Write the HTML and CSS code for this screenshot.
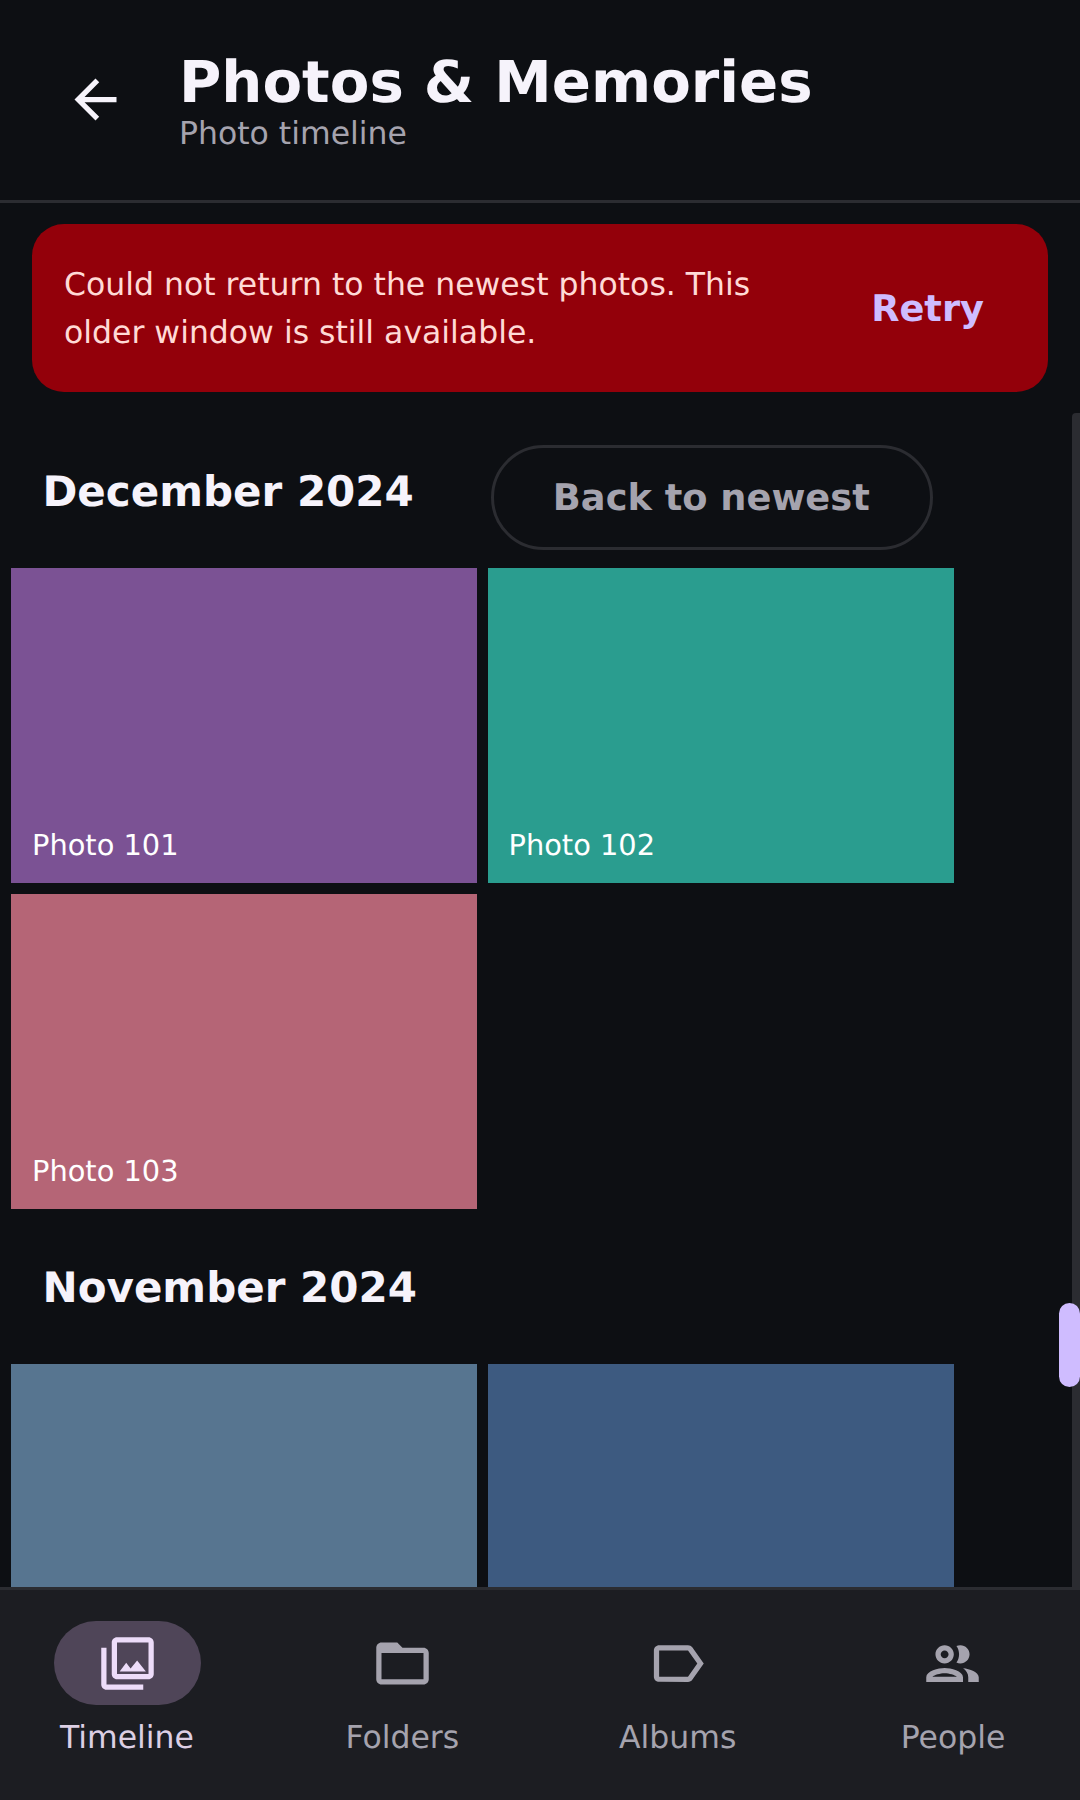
FILE: index.html
```html
<!DOCTYPE html>
<html lang="en">
<head>
<meta charset="utf-8">
<title>Photos &amp; Memories</title>
<link rel="stylesheet" href="styles.css">
</head>
<body>
<div class="app">
  <header class="topbar">
    <button class="icon-btn" aria-label="Back">
      <svg class="icon" viewBox="0 0 24 24"><path d="M20 11H7.83l5.59-5.59L12 4l-8 8 8 8 1.41-1.41L7.83 13H20v-2z"/></svg>
    </button>
    <div class="titles">
      <h1 class="title">Photos &amp; Memories</h1>
      <p class="subtitle">Photo timeline</p>
    </div>
  </header>
  <section class="banner">
    <p class="banner-text">Could not return to the newest photos. This older window is still available.</p>
    <button class="retry">Retry</button>
  </section>
  <main class="timeline">
    <div class="section-head">
      <h2 class="month">December 2024</h2>
      <button class="newest">Back to newest</button>
    </div>
    <div class="grid">
      <div class="tile purple"><span class="caption">Photo 101</span></div>
      <div class="tile teal"><span class="caption">Photo 102</span></div>
      <div class="tile rose"><span class="caption">Photo 103</span></div>
    </div>
    <div class="section-head">
      <h2 class="month">November 2024</h2>
    </div>
    <div class="grid">
      <div class="tile slate"></div>
      <div class="tile navy"></div>
    </div>
    <div class="rail"></div>
    <div class="thumb"></div>
  </main>
  <nav class="bottom-nav">
    <div class="nav-item active">
      <span class="pill"><svg class="icon" viewBox="0 0 24 24"><path d="M20 4v12H8V4h12m0-2H8c-1.1 0-2 .9-2 2v12c0 1.1.9 2 2 2h12c1.1 0 2-.9 2-2V4c0-1.1-.9-2-2-2zm-8.5 9.67l1.69 2.26 2.48-3.1L19 15H9zM2 6v14c0 1.1.9 2 2 2h14v-2H4V6H2z"/></svg></span>
      <span class="nav-label">Timeline</span>
    </div>
    <div class="nav-item">
      <span class="pill"><svg class="icon" viewBox="0 0 24 24"><path d="M20 6h-8l-2-2H4c-1.1 0-1.99.9-1.99 2L2 18c0 1.1.9 2 2 2h16c1.1 0 2-.9 2-2V8c0-1.1-.9-2-2-2zm0 12H4V8h16v10z"/></svg></span>
      <span class="nav-label">Folders</span>
    </div>
    <div class="nav-item">
      <span class="pill"><svg class="icon" viewBox="0 0 24 24"><path d="M17.63 5.84C17.27 5.33 16.67 5 16 5L5 5.01C3.9 5.01 3 5.9 3 7v10c0 1.1.9 1.99 2 1.99L16 19c.67 0 1.27-.33 1.63-.84L22 12l-4.37-6.16zM16 17H5V7h11l3.55 5L16 17z"/></svg></span>
      <span class="nav-label">Albums</span>
    </div>
    <div class="nav-item">
      <span class="pill"><svg class="icon" viewBox="0 0 24 24"><path d="M9 13.75c-2.34 0-7 1.17-7 3.5V19h14v-1.75c0-2.33-4.66-3.5-7-3.5zM4.34 17c.84-.58 2.87-1.25 4.66-1.25s3.82.67 4.66 1.25H4.34zM9 12c1.93 0 3.5-1.57 3.5-3.5S10.93 5 9 5 5.5 6.57 5.5 8.5 7.07 12 9 12zm0-5c.83 0 1.5.67 1.5 1.5S9.83 10 9 10s-1.5-.67-1.5-1.5S8.17 7 9 7zm7.04 6.81c1.16.84 1.96 1.96 1.96 3.44V19h4v-1.75c0-2.02-3.5-3.17-5.96-3.44zM15 12c1.93 0 3.5-1.57 3.5-3.5S16.93 5 15 5c-.54 0-1.04.13-1.5.35.63.89 1 1.98 1 3.15s-.37 2.26-1 3.15c.46.22.96.35 1.5.35z"/></svg></span>
      <span class="nav-label">People</span>
    </div>
  </nav>
</div>
</body>
</html>
```
FILE: styles.css
```css
* { box-sizing: border-box; }
html, body { margin: 0; padding: 0; }
body { background: #0d0f13; font-family: "DejaVu Sans", sans-serif; text-rendering: geometricPrecision; }
h1, h2, p { margin: 0; }
button { font-family: inherit; text-rendering: inherit; background: none; border: 0; padding: 0; }
.app { width: 1080px; height: 1800px; display: flex; flex-direction: column; overflow: hidden; }
.icon { width: 63px; height: 63px; display: block; fill: currentColor; }

.topbar { height: 203px; flex: none; display: flex; align-items: center; padding: 0 0 2px 64px; border-bottom: 3px solid #2b2c31; }
.icon-btn { color: #f6f3fb; margin-right: 52px; margin-top: 0; }
.titles { display: flex; flex-direction: column; }
.title { font-size: 57.75px; line-height: 68px; padding-top: 2px; font-weight: 700; color: #f6f3fb; }
.subtitle { font-size: 31.5px; line-height: 36px; color: #a5a3ae; }

.banner { flex: none; margin: 21px 32px 21px; height: 168px; padding: 0 32px; background: #93000a; border-radius: 32px; display: flex; align-items: center; }
.banner-text { flex: 1; font-size: 31.5px; line-height: 48.5px; padding-top: 2px; color: #ffdad6; }
.retry { font-size: 36.75px; font-weight: 700; color: #cfbcff; padding: 0 32px; flex: none; }

.timeline { flex: 1; min-height: 0; overflow: hidden; position: relative; padding-left: 11px; }
.section-head { height: 155px; display: flex; align-items: center; padding-left: 31.5px; }
.month { font-size: 42px; line-height: 52px; margin-top: 2px; font-weight: 700; color: #f6f3fb; }
.newest { width: 442px; height: 105px; margin-left: 77px; margin-top: 14px; padding-right: 1px; border: 3px solid #2b2c31; border-radius: 53px; font-size: 36.75px; font-weight: 700; color: #a5a3ae; }
.grid { display: grid; grid-template-columns: 466px 466px; grid-auto-rows: 315px; gap: 11px 10.5px; }
.tile { display: flex; align-items: flex-end; padding: 0 0 20px 21px; }
.caption { font-size: 28.875px; line-height: 36px; color: #fff; }
.purple { background: #7b5294; }
.teal { background: #2a9d8f; }
.rose { background: #b56576; }
.slate { background: #577590; }
.navy { background: #3d5a80; }
.rail { position: absolute; top: 0; bottom: 0; right: 0; width: 8px; background: #2b2c31; border-radius: 4px 0 0 0; }
.thumb { position: absolute; top: 890px; right: 0; width: 21px; height: 84px; background: #cfbcff; border-radius: 10.5px; }

.bottom-nav { flex: none; height: 213px; background: #1c1d22; border-top: 3px solid #2b2c31; padding: 31px 21px 0; display: flex; justify-content: space-between; }
.nav-item { width: 212px; display: flex; flex-direction: column; align-items: center; color: #a5a3ae; }
.pill { width: 147px; height: 84px; border-radius: 42px; display: flex; align-items: center; justify-content: center; }
.nav-label { font-size: 31.5px; line-height: 40px; margin-top: 13px; }
.active .pill { background: #4f4558; color: #eddcf9; }
.active .nav-label { color: #dccfe4; }
```
